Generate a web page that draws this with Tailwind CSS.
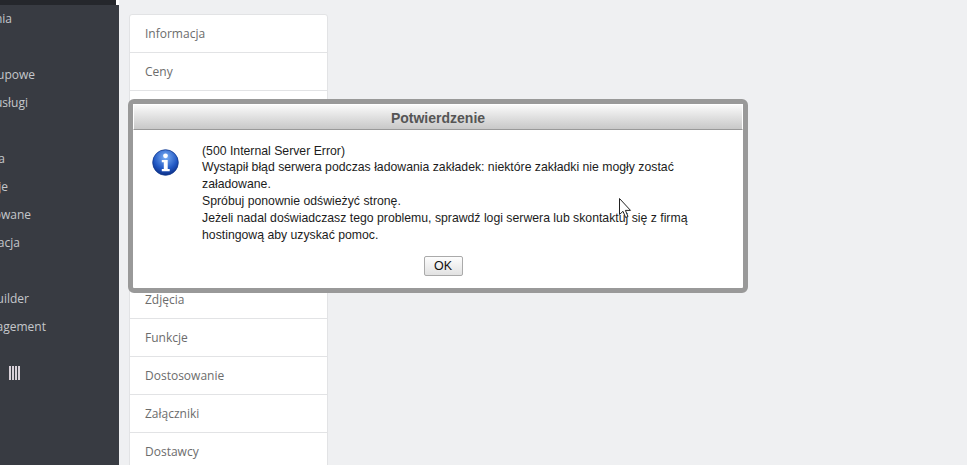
<!DOCTYPE html>
<html lang="pl">
<head>
<meta charset="utf-8">
<script src="https://cdn.jsdelivr.net/npm/@tailwindcss/browser@4"></script>
<title>Potwierdzenie</title>
</head>
<body class="w-[967px] h-[465px] overflow-hidden bg-[#eff0f2] relative">
<div class="flex h-[465px] items-start">
  <aside class="w-[119px] h-[465px] shrink-0 bg-[#383b42] text-[#c5c7cb] text-[12px] font-['Open_Sans',sans-serif] flex flex-col overflow-hidden">
    <div class="h-[5px] shrink-0 flex"><div class="w-[116px] bg-[#25272c]"></div><div class="w-[3px] bg-white"></div></div>
    <div class="h-[28px] w-[12px] flex items-center justify-end whitespace-nowrap">Zamówienia</div>
    <div class="h-[28px]"></div>
    <div class="h-[28px] w-[35px] flex items-center justify-end whitespace-nowrap">Grupowe</div>
    <div class="h-[28px] w-[28px] flex items-center justify-end whitespace-nowrap">i usługi</div>
    <div class="h-[28px]"></div>
    <div class="h-[28px] w-[5px] flex items-center justify-end whitespace-nowrap">Strona</div>
    <div class="h-[28px] w-[8px] flex items-center justify-end whitespace-nowrap">Moduje</div>
    <div class="h-[28px] w-[31px] flex items-center justify-end whitespace-nowrap">Zaawansowane</div>
    <div class="h-[28px] w-[20px] flex items-center justify-end whitespace-nowrap">Lokalizacja</div>
    <div class="h-[28px]"></div>
    <div class="h-[28px] w-[29px] flex items-center justify-end whitespace-nowrap">Builder</div>
    <div class="h-[28px] w-[46px] flex items-center justify-end whitespace-nowrap">Management</div>
    <div class="mt-[25px] ml-[9px] flex gap-[1px] h-[14px]">
      <span class="w-[2px] bg-[#d8d0d8]"></span><span class="w-[2px] bg-[#d8d0d8]"></span><span class="w-[2px] bg-[#d8d0d8]"></span><span class="w-[2px] bg-[#d8d0d8]"></span>
    </div>
  </aside>
  <nav class="ml-[10px] mt-[14px] w-[199px] shrink-0 bg-white border border-[#e2e3e5] rounded-[3px] text-[12px] text-[#6c6c6c] font-['Open_Sans',sans-serif] divide-y divide-[#e2e3e5] [&>div]:h-[38px] [&>div]:flex [&>div]:items-center [&>div]:pl-[15px]">
    <div>Informacja</div>
    <div>Ceny</div>
    <div>SEO</div>
    <div>Powiązania</div>
    <div>Transport</div>
    <div>Kombinacje</div>
    <div>Ilości</div>
    <div>Zdjęcia</div>
    <div>Funkcje</div>
    <div>Dostosowanie</div>
    <div>Załączniki</div>
    <div>Dostawcy</div>
  </nav>
</div>

<div class="absolute left-[128px] top-[99px] w-[620px] h-[194px] border-[5px] border-[#999] rounded-[6px] bg-white font-['Liberation_Sans',Arial,sans-serif] flex flex-col">
  <div class="h-[26px] shrink-0 bg-gradient-to-b from-[#fafafa] to-[#c8c8c8] border border-white border-b-[#999] flex items-center justify-center pt-[2px] text-[14px] font-bold text-[#555]">Potwierdzenie</div>
  <div class="flex pt-[12.6px]">
    <div class="w-[69px] shrink-0 pl-[19px] pt-[6px]">
      <svg width="27" height="27" viewBox="0 0 27 27">
        <defs>
          <radialGradient id="b" cx="50%" cy="30%" r="70%"><stop offset="0" stop-color="#7fb2f5"/><stop offset="0.65" stop-color="#2158c4"/><stop offset="1" stop-color="#0d2f86"/></radialGradient>
        </defs>
        <circle cx="13.5" cy="13.5" r="12.8" fill="url(#b)" stroke="#123a8f" stroke-width="0.8"/>
        <circle cx="13.5" cy="6.8" r="2.4" fill="#fff"/>
        <path d="M9.8 11h5.9v9h2v2.3H9.8V20h2v-6.7h-2z" fill="#fff"/>
      </svg>
    </div>
    <div class="text-[12.25px] leading-[16.8px] text-[#1c1c1c] w-[530px]">
      <p>(500 Internal Server Error)</p>
      <p>Wystąpił błąd serwera podczas ładowania zakładek: niektóre zakładki nie mogły zostać załadowane.</p>
      <p>Spróbuj ponownie odświeżyć stronę.</p>
      <p>Jeżeli nadal doświadczasz tego problemu, sprawdź logi serwera lub skontaktuj się z firmą hostingową aby uzyskać pomoc.</p>
    </div>
  </div>
  <div class="flex justify-center mt-[12.4px] pl-[10px]">
    <button class="w-[39px] h-[20px] border border-[#aaa] rounded-[2px] bg-gradient-to-b from-[#fdfdfd] to-[#e2e2e2] text-[12.5px] text-[#111]">OK</button>
  </div>
</div>

<svg class="absolute left-[619px] top-[198px]" width="13" height="21" viewBox="0 0 13 21">
  <path d="M0.5 0.5V16.5L4 13.3L6.6 19.5L9 18.5L6.4 12.4H11.5Z" fill="#fff" stroke="#222" stroke-width="1"/>
</svg>
</body>
</html>
